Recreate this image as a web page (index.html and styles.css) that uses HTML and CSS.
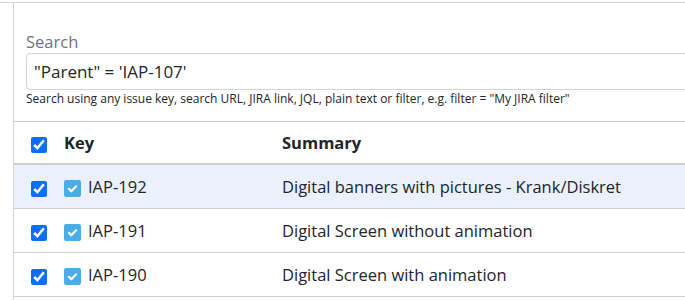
FILE: index.html
```html
<!DOCTYPE html>
<html lang="en">
<head>
  <meta charset="UTF-8">
  <title>Issue picker</title>
  <link rel="stylesheet" href="styles.css">
</head>
<body>
  <div class="frame">
    <div class="panel">
      <div class="search">
        <label class="search-label" for="jql">Search</label>
        <input class="search-input" id="jql" type="text" value="&quot;Parent&quot; = 'IAP-107'">
        <div class="search-help">Search using any issue key, search URL, JIRA link, JQL, plain text or filter, e.g. filter = "My JIRA filter"</div>
      </div>

      <table class="issues">
        <thead>
          <tr>
            <th class="col-check"><input type="checkbox" checked></th>
            <th class="col-key">Key</th>
            <th>Summary</th>
          </tr>
        </thead>
        <tbody>
          <tr class="selected">
            <td class="col-check"><input type="checkbox" checked></td>
            <td class="col-key"><span class="task-icon"><svg viewBox="0 0 16 16" width="17" height="17"><rect width="16" height="16" rx="2" fill="#4bade8"/><path d="M4.6 8.3l2.3 2.3 4.5-4.7" fill="none" stroke="#fff" stroke-width="2" stroke-linecap="round" stroke-linejoin="round"/></svg></span>IAP-192</td>
            <td>Digital banners with pictures - Krank/Diskret</td>
          </tr>
          <tr>
            <td class="col-check"><input type="checkbox" checked></td>
            <td class="col-key"><span class="task-icon"><svg viewBox="0 0 16 16" width="17" height="17"><rect width="16" height="16" rx="2" fill="#4bade8"/><path d="M4.6 8.3l2.3 2.3 4.5-4.7" fill="none" stroke="#fff" stroke-width="2" stroke-linecap="round" stroke-linejoin="round"/></svg></span>IAP-191</td>
            <td>Digital Screen without animation</td>
          </tr>
          <tr>
            <td class="col-check"><input type="checkbox" checked></td>
            <td class="col-key"><span class="task-icon"><svg viewBox="0 0 16 16" width="17" height="17"><rect width="16" height="16" rx="2" fill="#4bade8"/><path d="M4.6 8.3l2.3 2.3 4.5-4.7" fill="none" stroke="#fff" stroke-width="2" stroke-linecap="round" stroke-linejoin="round"/></svg></span>IAP-190</td>
            <td>Digital Screen with animation</td>
          </tr>
        </tbody>
      </table>
    </div>
  </div>
</body>
</html>
```

FILE: styles.css
```css
html, body {
  margin: 0;
  overflow: hidden;
}
body {
  font-family: "Open Sans", "Noto Sans", sans-serif;
  font-size: 16.5px;
  color: #212529;
  background: #fff;
}
.frame {
  margin-top: 2px;
  border-top: 1px solid #d4d4d4;
  width: 900px;
}
.panel {
  margin-left: 13px;
  border-left: 1px solid #d4d4d4;
  padding-top: 28px;
  height: 400px;
}
.search {
  padding-left: 12px;
}
.search-label {
  display: block;
  font-size: 16.5px;
  line-height: 22px;
  color: #6c757d;
}
.search-input {
  display: block;
  box-sizing: border-box;
  width: 100%;
  height: 37px;
  padding: 0 7px;
  border: 1px solid #ced4da;
  border-radius: 4px;
  font-family: inherit;
  font-size: 17px;
  color: #212529;
  outline: none;
}
.search-help {
  font-size: 12px;
  line-height: 16px;
  margin-top: 1px;
}
.issues {
  margin-top: 14px;
  width: 100%;
  border-collapse: collapse;
  border-top: 1px solid #cfcfcf;
}
.issues th,
.issues td {
  text-align: left;
  padding: 0;
  vertical-align: middle;
}
.issues th {
  height: 41px;
  font-weight: bold;
  border-bottom: 2px solid #cfcfcf;
}
.issues td {
  height: 43px;
  border-bottom: 1px solid #cfcfcf;
}
.issues .selected td {
  background: #eaf1fa;
}
.col-check {
  width: 33px;
  padding-left: 17px !important;
}
.col-key {
  width: 218px;
}
.issues input[type="checkbox"] {
  margin: 0;
  width: 16px;
  height: 16px;
  accent-color: #0d6efd;
  vertical-align: middle;
}
.task-icon {
  display: inline-block;
  vertical-align: middle;
  margin-right: 7px;
  line-height: 0;
}
```
